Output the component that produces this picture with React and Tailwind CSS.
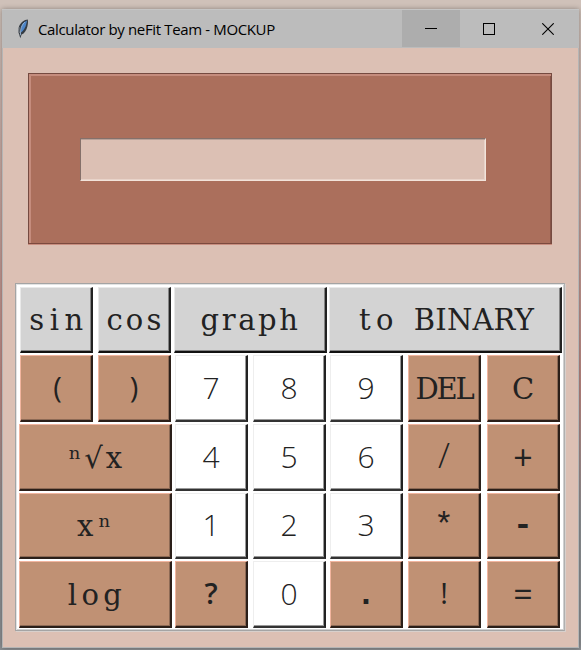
const MONO = "font-['Liberation_Mono','Courier_New',monospace] text-[33px]";
const SLAB = "font-['DejaVu_Serif','Liberation_Serif',serif] text-[29px]";
const LIGHT = "font-['Open_Sans','Noto_Sans',sans-serif] font-light text-[30px] pb-[3px]";
const PUNCT = "font-['Open_Sans','Noto_Sans',sans-serif] text-[29px] pb-[6px]";
const SLASH = "font-['Open_Sans','Noto_Sans',sans-serif] text-[35px] font-light pb-[7px]";
const SIGN = "font-['Open_Sans','Noto_Sans',sans-serif] text-[34px] pb-0.5";

// Raised key: light upper-left edge, shadow and near-black line on the lower right.
const TONES = {
  grey: 'bg-[#d3d3d3] border-t-[#e9e9e9] border-l-[#e9e9e9] border-r-[#222222] border-b-[#111111] shadow-[inset_-1px_-1px_0_#858585]',
  white: 'bg-white border-t-[#eeeeee] border-l-[#eeeeee] border-r-[#222222] border-b-[#333333] shadow-[inset_-1px_-1px_0_#999999]',
  brown: 'bg-[#c09174] border-t-[#f2b59f] border-l-[#f2b59f] border-r-[#2b1f19] border-b-[#2b1f19] shadow-[inset_-1px_-1px_0_#8d6a55]',
};

function Key({ tone = 'brown', width = 'w-[73px]', gap = '', face = MONO, spacing = '', children }) {
  return (
    <button
      type="button"
      className={`flex h-full shrink-0 items-center justify-center whitespace-pre border-t border-l border-r-2 border-b-2 pt-0.5 leading-none text-[#222222] ${face} ${TONES[tone]} ${width} ${gap} ${spacing}`}
    >
      {children}
    </button>
  );
}

function Row({ height = 'h-[67px]', children }) {
  return <div className={`flex ${height}`}>{children}</div>;
}

function Digits({ values, first = 'ml-[3px]' }) {
  return (
    <>
      <Key tone="white" face={LIGHT} gap={first}>{values[0]}</Key>
      <Key tone="white" face={LIGHT} gap="ml-[5px]">{values[1]}</Key>
      <Key tone="white" face={LIGHT} gap="ml-[4px]">{values[2]}</Key>
    </>
  );
}

function Feather() {
  return (
    <svg width="14" height="22" viewBox="0 0 14 22" fill="none">
      <path d="M11.8 1.6C8.4 1.6 4.6 4.6 3 8.6c-1 2.8-1.1 5.3.1 7.6l1.2 4 1.3-3.6c2.9-1.2 4.8-4.4 5.8-8.2.6-2.5.8-4.6.4-6.8Z" fill="#343b43" />
      <path d="M11 2.6C8 3.8 5.9 6.6 5.3 9.8l-.5 4.8c3-1.6 5.5-6.2 6.2-12Z" fill="#4c84c7" />
      <path d="M8.8 4.2C6.6 6 5.2 8.6 4.7 12.1l-.3 5.2" stroke="#a9c8e8" strokeWidth=".8" />
      <path d="M3.2 9.4c-.6 2-.5 3.8.2 5.2" stroke="#9aa0a6" />
    </svg>
  );
}

function TitleBar() {
  return (
    <header className="flex h-[39px] bg-[#bcbcbc] border-t border-[#c5c5c5]">
      <div className="flex flex-1 items-center pl-[14px]">
        <Feather />
        <span className="ml-2 whitespace-nowrap pb-px font-['Open_Sans','Noto_Sans',sans-serif] text-[15px] leading-5 tracking-[-0.36px] text-black">
          Calculator by neFit Team - MOCKUP
        </span>
      </div>
      <button type="button" aria-label="Minimize" className="flex h-[37px] w-[58px] items-center justify-center bg-[#adadad]">
        <span className="h-px w-3 bg-black" />
      </button>
      <button type="button" aria-label="Maximize" className="flex h-[38px] w-[58px] items-center justify-center">
        <span className="size-3 border border-black" />
      </button>
      <button type="button" aria-label="Close" className="flex h-[38px] w-[61px] items-center justify-center pr-px">
        <svg width="12" height="12" viewBox="0 0 12 12" stroke="#000" strokeWidth="1.1">
          <path d="M.3.3l11.4 11.4M11.7.3L.3 11.7" />
        </svg>
      </button>
    </header>
  );
}

function Display() {
  return (
    <section className="ml-[26px] mt-[25px] h-[171px] w-[524px] border border-[#754a40] border-b-[#7c4a3e] bg-[#ab6f5c] pl-[51px] pt-[64px] shadow-[inset_2px_2px_0_#c58c7d,inset_-1px_0_0_#865347,0_1px_0_#c98e80]">
      <div className="h-[43px] w-[406px] border border-t-[#85706a] border-l-[#85706a] border-r-[#f2e3da] border-b-[#f2e3da] bg-[#dcc0b4] shadow-[inset_0_1px_0_#b9a198,inset_-1px_-1px_0_#e8d3c9]" />
    </section>
  );
}

function Keypad() {
  return (
    <section className="ml-[13px] mt-[39px] flex h-[348px] w-[550px] flex-col gap-[2px] border border-[#a4a4a4] border-r-[#b0b0b0] bg-white pl-[3px] pt-[3px] shadow-[inset_1px_1px_0_#e3e3e3,inset_-1px_-1px_0_#d0d0d0,1px_1px_0_#d8d0cc]">
      <Row height="h-[66px]">
        <Key tone="grey" face={SLAB} spacing="tracking-[5.5px] pl-[6px]" gap="ml-[1px]">sin</Key>
        <Key tone="grey" face={SLAB} spacing="tracking-[3.2px] pl-[3px]" gap="ml-[5px]">cos</Key>
        <Key tone="grey" face={SLAB} spacing="tracking-[2.6px] pl-[1px]" width="w-[153px]" gap="ml-[3px]">graph</Key>
        <Key tone="grey" face={SLAB} spacing="tracking-[0.2px] pl-[3px]" width="w-[233px]" gap="ml-[2px]">
          <span className="tracking-[5.5px]">to </span>BINARY
        </Key>
      </Row>
      <Row>
        <Key face={PUNCT} spacing="pl-[3px]" gap="ml-[1px]">(</Key>
        <Key face={PUNCT} gap="ml-[5px]">)</Key>
        <Digits first="ml-[4px]" values={['7', '8', '9']} />
        <Key face={SLAB} spacing="tracking-[-2.2px]" gap="ml-[5px]">DEL</Key>
        <Key face={SLAB} gap="ml-[6px]">C</Key>
      </Row>
      <Row>
        <Key width="w-[153px]" face={SLAB} spacing="tracking-[3px] pl-[4px]">ⁿ√x</Key>
        <Digits values={['4', '5', '6']} />
        <Key face={SLASH} gap="ml-[5px]">/</Key>
        <Key gap="ml-[6px]" face={SIGN}>+</Key>
      </Row>
      <Row height="h-[66px]">
        <Key width="w-[153px]" face={SLAB} spacing="tracking-[5px] pl-[3px]">xⁿ</Key>
        <Digits values={['1', '2', '3']} />
        <Key gap="ml-[5px]">*</Key>
        <Key gap="ml-[6px]" spacing="font-bold">-</Key>
      </Row>
      <Row>
        <Key width="w-[153px]" face={SLAB} spacing="tracking-[4.4px] pl-[4px]">log</Key>
        <Key gap="ml-[3px]" face={PUNCT} spacing="font-semibold">?</Key>
        <Key tone="white" face={LIGHT} gap="ml-[5px]">0</Key>
        <Key gap="ml-[4px]" spacing="font-bold">.</Key>
        <Key gap="ml-[5px]" face={PUNCT}>!</Key>
        <Key gap="ml-[6px]" face={SIGN}>=</Key>
      </Row>
    </section>
  );
}

export default function App() {
  return (
    <div className="h-[650px] w-[581px] overflow-hidden bg-linear-to-b from-[#cfc1b9] from-1% via-[#b98580] via-60% to-[#8c8f92] to-80% pl-[2px] pt-[9px]">
      <main className="h-[639px] w-[577px] border-r border-b border-l border-[#b5b5b5] bg-[#dcc0b4] shadow-[0_0_5px_#00000055]">
        <div className="-mx-px">
          <TitleBar />
          <Display />
          <Keypad />
        </div>
      </main>
    </div>
  );
}
